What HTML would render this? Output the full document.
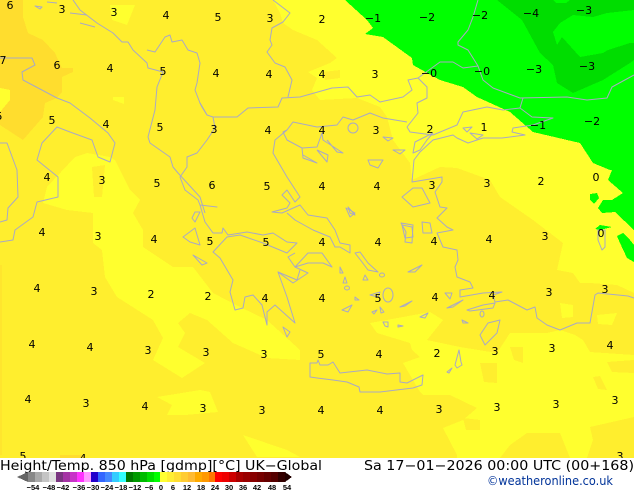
<!DOCTYPE html>
<html><head><meta charset="utf-8"><title>Height/Temp. 850 hPa</title>
<style>
html,body{margin:0;padding:0;background:#fff}
svg{display:block}
.c{fill:none;stroke:#a9a9c4;stroke-width:1;stroke-linejoin:round}
.n text{font:11px "DejaVu Sans","Liberation Sans",sans-serif;fill:#000;text-anchor:middle}
.l text{font:bold 7.5px "Liberation Sans",sans-serif;fill:#000;text-anchor:middle}
</style></head><body>
<svg width="634" height="490" viewBox="0 0 634 490" xmlns="http://www.w3.org/2000/svg">
<defs><clipPath id="m"><rect width="634" height="458"/></clipPath></defs>
<g clip-path="url(#m)">
<rect width="634" height="458" fill="#ffee2e"/>
<g shape-rendering="crispEdges">
<polygon fill="#ffdd2e" points="0,0 23,0 23,17 28,33 43,40 55,53 62,68 73,68 73,72 62,77 62,92 57,98 45,103 43,117 23,140 0,125 0,112 10,100 10,90 0,88"/>
<rect x="0" y="265" width="2" height="190" fill="#ffe52e"/>
<rect x="60" y="455" width="25" height="3" fill="#ffdd2e"/>
<g fill="#ffff2e">
<polygon points="273,0 634,0 634,293 617,285 590,283 580,283 573,273 557,270 563,243 533,220 500,197 490,180 457,168 440,167 412,180 410,163 393,140 387,117 380,107 357,98 320,100 312,90 317,78 308,72 330,63 337,58 317,40 293,30 283,23 280,13"/>
<polygon points="634,355 634,458 457,458 457,455 443,428 463,420 477,408 450,395 423,395 420,392 403,363 420,357 412,350 410,343 377,333 370,323 403,317 430,312 443,320 427,340 460,347 497,353 510,333 547,333 560,330 575,335 583,340 590,352"/>
<polygon points="110,157 115,160 130,190 140,200 133,213 143,230 143,247 173,267 193,267 213,293 240,307 267,320 300,350 300,360 267,358 233,343 207,320 190,313 178,323 185,333 178,347 205,363 182,378 153,360 163,338 153,320 117,297 105,277 102,250 93,243 93,213 67,210 43,203 47,187 75,157 87,153"/>
<polygon points="157,397 200,390 210,392 218,412 185,415 167,415 172,405"/>
<polygon points="243,435 287,450 300,457 257,457"/>
<polygon points="110,5 135,5 127,25 112,20"/>
<polygon points="113,97 124,97 124,104 113,100"/>
<polygon points="0,88 10,90 10,100 0,112"/>
<polygon points="560,303 573,305 573,317 562,318"/>
<polygon points="597,315 617,313 612,325 598,324"/>
</g>
<g fill="#ffee2e">
<polygon points="92,167 105,165 102,197 94,197"/>
<polygon points="323,72 340,70 340,78 325,80"/>
<polygon points="480,363 497,363 497,383 484,382"/>
<polygon points="510,347 523,347 523,363 514,360"/>
<polygon points="593,377 600,376 607,390 598,389"/>
<polygon points="607,362 634,360 634,373 612,372"/>
<polygon points="463,418 480,420 480,430 466,430"/>
<polygon points="527,433 560,433 570,458 500,458 510,445"/>
<polygon points="590,427 634,417 634,458 587,458 593,440"/>
</g>
<polygon fill="#00ff00" points="345,0 634,0 634,230 615,212 602,213 598,208 603,200 612,200 623,193 608,180 612,170 610,170 593,163 580,143 533,132 510,112 477,97 463,87 440,80 413,65 412,58 383,37 365,34 373,28 367,20"/>
<polygon fill="#00ff00" points="590,194 597,193 599,198 594,204 590,200"/>
<polygon fill="#00ff00" points="595,229 600,225 612,227 600,230"/>
<polygon fill="#00ff00" points="617,236 623,233 630,240 634,245 634,262 627,258 620,243"/>
<polygon fill="#00dd00" points="497,0 634,0 634,60 630,63 603,80 573,93 557,83 553,65 540,53 522,20"/>
<polygon fill="#00ff00" points="553,32 557,45 562,37 580,57 603,53 608,50 630,43 634,43 634,10 607,13 593,17 573,15 560,23"/>
<polygon fill="#00ff00" points="553,0 570,0 566,3 556,3"/>
</g>
<g class="c">
<path d="M73,0L80,10 97,23 113,33 122,42 128,42 133,50 147,63 148,68 163,72 157,87 155,110 148,137 150,143 170,157 173,167 178,173 200,197 205,213"/>
<path d="M147,50L155,52 165,37 170,35 172,42 182,40 188,50 197,53 200,63 197,83 195,90 200,103 207,115 213,117 237,117 248,108 278,107 282,98 300,97 332,88 348,87 357,97 370,95 380,102 403,97 412,90 408,80 418,78 427,87 427,98 417,103 418,113 407,127"/>
<path d="M273,0L290,13 283,22 272,28 270,40 272,45 267,52 275,63 285,67 292,80 288,97"/>
<path d="M418,78L440,62 453,62 463,68 478,66 483,80 493,88 520,98 567,97 587,100 607,98 612,87 634,75"/>
<path d="M478,0L473,17 468,30 458,42 458,45 468,50 478,66"/>
<path d="M523,98L520,108 532,117 553,118 533,125 513,128 512,132 525,135 502,138 483,138 468,143 457,138 453,135 433,140 420,152 414,160 412,182 442,177 442,182 435,192 440,207 447,208 437,218 447,227 453,230 437,233 443,247 457,250 458,260 455,267 457,277 470,282 473,288 460,290 460,297 483,293 502,292 493,295 495,302 508,300 527,310 535,307 537,318 547,325 560,330 577,323 590,323 595,295 598,293 628,296 634,298"/>
<path d="M520,108L503,110 487,107 463,112 457,125 433,135 410,132 407,127"/>
<path d="M433,133L415,142 413,153 420,150 427,140 433,133"/>
<path d="M213,117L215,128 207,140 197,153 187,157 187,167 180,177 185,190 198,200 200,205 217,207 200,205 205,222 213,233 222,233 223,228 228,235 247,232 263,235 273,233 287,242 297,243 287,253 263,243 240,235 227,237 213,252 220,258 233,280 230,292 235,310 243,308 245,297 253,295 262,305 267,325 267,312 275,305 295,323 287,297 278,272 297,280 300,270"/>
<path d="M287,130L275,140 273,153 287,177 300,197 295,202 287,190 282,195 290,203 287,208 272,212 282,213 300,205 308,215 327,218 335,230 340,243 350,245 350,253 340,247 335,247 330,237 313,230 295,220 287,213"/>
<path d="M295,253L288,257 295,267 308,253 322,253 332,267 323,263 308,263 295,267 308,273 293,283 278,272"/>
<path d="M287,130L283,132 287,140 302,148 317,147 322,133 323,140 343,153 337,152 327,140M302,148L303,158 317,163 303,155M317,150L327,162 328,155 317,150"/>
<path d="M287,130L293,122 317,127 337,125 343,117 353,120 370,113 383,118 407,122"/>
<path d="M310,363L317,363 318,360 320,365 328,365 333,362 340,373 367,370 387,374 400,373 400,382 407,383 423,375 422,385 413,388 380,392 360,392 359,387 347,382 333,380 317,378 310,377Z"/>
<path d="M480,335L488,323 500,320 497,333 485,345Z"/>
<path d="M455,365L459,350 461,362 462,365 457,368ZM447,372L452,368 449,373Z"/>
<path d="M402,197L413,188 422,188 430,203 413,207ZM422,222L430,223 432,233 423,233ZM402,225L412,227 413,237 405,238ZM368,160L383,160 378,168 370,165ZM383,137L393,138 388,141ZM393,150L405,150 400,154ZM463,128L472,127 467,132ZM470,133L483,135 477,139ZM598,230L605,230 605,247 602,250 598,240ZM346,208L355,213 350,217Z"/>
<path d="M355,253L360,252 368,263 378,272 368,270 362,262ZM340,267L343,273 340,273ZM345,277L347,283 343,283ZM365,275L368,280 363,280ZM408,272L422,265 415,272ZM355,297L359,300 355,300ZM370,295L380,292 378,297ZM342,310L352,305 348,312ZM372,312L377,310 374,314ZM380,307L384,312 381,313ZM400,307L412,301 405,306ZM445,293L452,293 450,299ZM447,308L463,300 453,307ZM467,310L483,305 495,303 493,308 470,311ZM420,317L428,313 425,318ZM383,322L388,322 388,327 385,326ZM398,325L403,326 398,327ZM283,327L290,332 287,337ZM462,320L468,323 463,323Z"/>
<path d="M348,207L355,215 350,213ZM401,223L413,225 412,243 405,242 406,232ZM195,212L200,212 195,222 192,218ZM183,237L195,228 200,245 190,242ZM193,255L207,263 202,265ZM200,103L207,115 202,107ZM47,2L57,3M70,13L87,15M80,23L95,27M35,6L42,7 40,9Z"/>
<ellipse cx="353" cy="128" rx="5" ry="5"/>
<ellipse cx="388" cy="295" rx="5" ry="7"/>
<ellipse cx="382" cy="275" rx="2.500" ry="2"/>
<ellipse cx="347" cy="288" rx="2.500" ry="2"/>
<ellipse cx="482" cy="314" rx="2" ry="3"/>
<path d="M0,58L32,58 35,65 22,72 23,80 57,98 70,103 90,118 108,133 115,143 110,162 98,157 92,140 70,132 57,127 42,143 37,160 58,177 58,197 37,202 33,217 15,230 13,240 0,242"/>
<path d="M0,143L7,143 17,170 18,197 8,208 7,220 0,222"/>
</g>
<g class="n">
<text x="10" y="9">6</text><text x="62" y="13">3</text><text x="114" y="16">3</text><text x="166" y="19">4</text><text x="218" y="21">5</text><text x="270" y="22">3</text><text x="322" y="23">2</text><text x="373" y="22">−1</text><text x="427" y="21">−2</text><text x="480" y="19">−2</text><text x="531" y="17">−4</text><text x="584" y="14">−3</text>
<text x="3" y="64">7</text><text x="57" y="69">6</text><text x="110" y="72">4</text><text x="163" y="75">5</text><text x="216" y="77">4</text><text x="269" y="78">4</text><text x="322" y="78">4</text><text x="375" y="78">3</text><text x="429" y="77">−0</text><text x="482" y="75">−0</text><text x="534" y="73">−3</text><text x="587" y="70">−3</text>
<text x="-1" y="120">5</text><text x="52" y="124">5</text><text x="106" y="128">4</text><text x="160" y="131">5</text><text x="214" y="133">3</text><text x="268" y="134">4</text><text x="322" y="134">4</text><text x="376" y="134">3</text><text x="430" y="133">2</text><text x="484" y="131">1</text><text x="538" y="129">−1</text><text x="592" y="125">−2</text>
<text x="47" y="181">4</text><text x="102" y="184">3</text><text x="157" y="187">5</text><text x="212" y="189">6</text><text x="267" y="190">5</text><text x="322" y="190">4</text><text x="377" y="190">4</text><text x="432" y="189">3</text><text x="487" y="187">3</text><text x="541" y="185">2</text><text x="596" y="181">0</text>
<text x="42" y="236">4</text><text x="98" y="240">3</text><text x="154" y="243">4</text><text x="210" y="245">5</text><text x="266" y="246">5</text><text x="322" y="246">4</text><text x="378" y="246">4</text><text x="434" y="245">4</text><text x="489" y="243">4</text><text x="545" y="240">3</text><text x="601" y="237">0</text>
<text x="37" y="292">4</text><text x="94" y="295">3</text><text x="151" y="298">2</text><text x="208" y="300">2</text><text x="265" y="302">4</text><text x="322" y="302">4</text><text x="378" y="302">5</text><text x="435" y="301">4</text><text x="492" y="299">4</text><text x="549" y="296">3</text><text x="605" y="293">3</text>
<text x="32" y="348">4</text><text x="90" y="351">4</text><text x="148" y="354">3</text><text x="206" y="356">3</text><text x="264" y="358">3</text><text x="321" y="358">5</text><text x="379" y="358">4</text><text x="437" y="357">2</text><text x="495" y="355">3</text><text x="552" y="352">3</text><text x="610" y="349">4</text>
<text x="28" y="403">4</text><text x="86" y="407">3</text><text x="145" y="410">4</text><text x="203" y="412">3</text><text x="262" y="414">3</text><text x="321" y="414">4</text><text x="380" y="414">4</text><text x="439" y="413">3</text><text x="497" y="411">3</text><text x="556" y="408">3</text><text x="615" y="404">3</text>
<text x="23" y="460">5</text><text x="83" y="462">4</text><text x="620" y="460">3</text>
</g>
</g>
<text x="0" y="470" textLength="322" lengthAdjust="spacingAndGlyphs" font-family="'DejaVu Sans',sans-serif" font-size="13" fill="#000">Height/Temp. 850 hPa [gdmp][°C] UK−Global</text>
<text x="364" y="470" textLength="270" lengthAdjust="spacingAndGlyphs" font-family="'DejaVu Sans',sans-serif" font-size="13" fill="#000">Sa 17−01−2026 00:00 UTC (00+168)</text>
<text x="487" y="485" textLength="126" lengthAdjust="spacingAndGlyphs" font-family="'DejaVu Sans',sans-serif" font-size="12" fill="#003399">©weatheronline.co.uk</text>
<g shape-rendering="crispEdges">
<polygon points="17,477 28,472 28,482" fill="#666"/>
<rect x="28" y="472" width="7" height="10" fill="#888"/><rect x="35" y="472" width="7" height="10" fill="#aaa"/><rect x="42" y="472" width="7" height="10" fill="#c4c4c4"/><rect x="49" y="472" width="7" height="10" fill="#e0e0e0"/>
<rect x="56" y="472" width="7" height="10" fill="#7a3580"/><rect x="63" y="472" width="7" height="10" fill="#a533a5"/><rect x="70" y="472" width="7" height="10" fill="#c833c8"/><rect x="77" y="472" width="7" height="10" fill="#ff33ff"/><rect x="84" y="472" width="7" height="10" fill="#ff99ff"/>
<rect x="91" y="472" width="7" height="10" fill="#2200cc"/><rect x="98" y="472" width="7" height="10" fill="#3366ff"/><rect x="105" y="472" width="7" height="10" fill="#4488ff"/><rect x="112" y="472" width="7" height="10" fill="#33ccff"/><rect x="119" y="472" width="7" height="10" fill="#33ffff"/>
<rect x="126" y="472" width="7" height="10" fill="#007700"/><rect x="133" y="472" width="7" height="10" fill="#009900"/><rect x="140" y="472" width="7" height="10" fill="#00bb00"/><rect x="147" y="472" width="7" height="10" fill="#00dd00"/><rect x="154" y="472" width="6" height="10" fill="#00ff00"/>
<rect x="160" y="472" width="7" height="10" fill="#ffff33"/><rect x="167" y="472" width="7" height="10" fill="#ffee33"/><rect x="174" y="472" width="7" height="10" fill="#ffdd33"/><rect x="181" y="472" width="7" height="10" fill="#ffcc33"/><rect x="188" y="472" width="7" height="10" fill="#ffbb33"/>
<rect x="195" y="472" width="7" height="10" fill="#ffaa00"/><rect x="202" y="472" width="7" height="10" fill="#ff9900"/><rect x="209" y="472" width="6" height="10" fill="#ff7700"/>
<rect x="215" y="472" width="7" height="10" fill="#ff0000"/><rect x="222" y="472" width="7" height="10" fill="#ee0000"/><rect x="229" y="472" width="7" height="10" fill="#cc0000"/><rect x="236" y="472" width="7" height="10" fill="#aa0000"/><rect x="243" y="472" width="7" height="10" fill="#990000"/><rect x="250" y="472" width="7" height="10" fill="#880000"/><rect x="257" y="472" width="7" height="10" fill="#770000"/><rect x="264" y="472" width="7" height="10" fill="#660000"/><rect x="271" y="472" width="7" height="10" fill="#550000"/><rect x="278" y="472" width="7" height="10" fill="#330000"/>
<polygon points="285,472 292,477 285,482" fill="#220000"/>
</g>
<g class="l">
<text x="33" y="490">−54</text><text x="49" y="490">−48</text><text x="63" y="490">−42</text><text x="79" y="490">−36</text><text x="93" y="490">−30</text><text x="107" y="490">−24</text><text x="121" y="490">−18</text><text x="135" y="490">−12</text><text x="149" y="490">−6</text><text x="161" y="490">0</text><text x="173" y="490">6</text><text x="187" y="490">12</text><text x="201" y="490">18</text><text x="215" y="490">24</text><text x="229" y="490">30</text><text x="243" y="490">36</text><text x="257" y="490">42</text><text x="272" y="490">48</text><text x="287" y="490">54</text>
</g>
</svg>
</body></html>
